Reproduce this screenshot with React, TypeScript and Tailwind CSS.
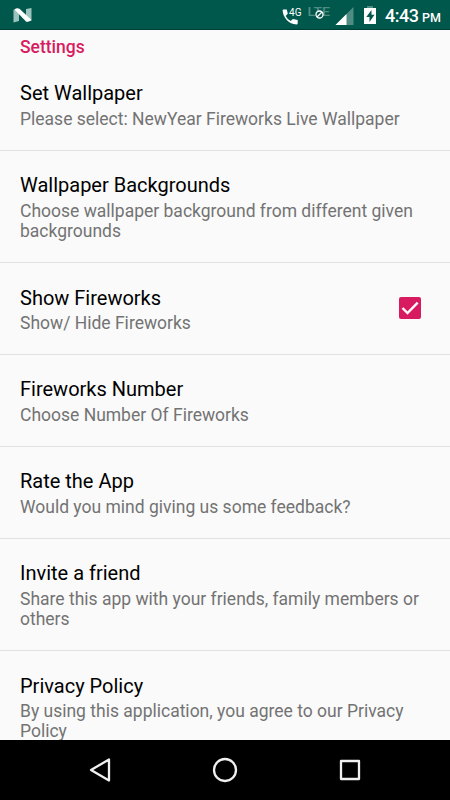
type Item = { title: string; lines: string[]; checked?: boolean; offset?: boolean };

const items: Item[] = [
  { title: 'Set Wallpaper', lines: ['Please select: NewYear Fireworks Live Wallpaper'] },
  { title: 'Wallpaper Backgrounds', lines: ['Choose wallpaper background from different given', 'backgrounds'] },
  { title: 'Show Fireworks', lines: ['Show/ Hide Fireworks'], checked: true, offset: true },
  { title: 'Fireworks Number', lines: ['Choose Number Of Fireworks'] },
  { title: 'Rate the App', lines: ['Would you mind giving us some feedback?'] },
  { title: 'Invite a friend', lines: ['Share this app with your friends, family members or', 'others'] },
  { title: 'Privacy Policy', lines: ['By using this application, you agree to our Privacy', 'Policy'], offset: true },
];

function StatusBar() {
  return (
    <header className="flex h-[30px] shrink-0 items-center justify-between border-b border-[#003d33] bg-[#00574b] text-white">
      <svg className="ml-[13px]" width="20" height="30" viewBox="13 0 20 30">
        <path d="M13.500 9.500l5.500 1v10.500l-5.500 1.500zM26 9l5.500-1v12.500l-5.500 1z" fill="#9cc3bd" />
        <path d="M14.500 9.500q2-2 5-.8L31.500 20q-2.500 2.500-5.500 1.500z" fill="#fff" />
      </svg>
      <div className="flex h-full items-center">
        <svg width="98" height="30" viewBox="281 0 98 30" fontFamily="Roboto, sans-serif">
          <path d="M283.300 9.500h3.500l1 4.200-2.200 2.300q1.900 3.400 5.100 5.100l2.200-2.200 4.800 1v3.700q-.2.900-1.100.9C288.500 24.300 283 17.500 282.600 10.300q0-.8.7-.8z" fill="#fff" />
          <text x="289" y="15.500" fontSize="11.500" fill="#fff" textLength="12.500" lengthAdjust="spacingAndGlyphs">4G</text>
          <text x="307.500" y="16" fontSize="13.500" fontWeight="500" fill="#4f8d84" textLength="22.500" lengthAdjust="spacingAndGlyphs">LTE</text>
          <circle cx="319.500" cy="14.500" r="3.500" fill="#00574b" stroke="#fff" strokeWidth="1.300" />
          <path d="M317 17l5-5" stroke="#fff" strokeWidth="1.300" />
          <path d="M353.500 7v18h-18z" fill="#4f8d84" />
          <path d="M346.500 14v11h-11z" fill="#fff" />
          <path d="M367 6h6v2h-6z" fill="#4f8d84" />
          <path d="M364 8h12v16h-12z" fill="#fff" />
          <path d="M371.500 10l-5.200 7h3.200v5l5-7.200h-3z" fill="#00574b" />
        </svg>
        <div className="ml-[6px] flex w-[65px] items-baseline whitespace-nowrap pt-[4px] font-medium leading-[30px]">
          <span className="text-[18px] tracking-[-0.5px]">4:43</span>
          <span className="ml-[3.5px] text-[12.5px]">PM</span>
        </div>
      </div>
    </header>
  );
}

function Row({ item, last }: { item: Item; last: boolean }) {
  return (
    <section
      className={`flex shrink-0 items-start justify-between border-[#e1e1e1] pl-5 pr-[29px] ${last ? '' : 'border-b'} ${item.lines.length > 1 ? 'h-[112px]' : 'h-[92px]'}`}
    >
      <div className={`whitespace-nowrap ${item.offset ? 'pt-[23px]' : 'pt-[22px]'}`}>
        <h2 className="text-[20px] leading-6 text-black">{item.title}</h2>
        <p className={`text-[17.5px] leading-[20px] text-[#737373] ${item.offset ? 'mt-[3px]' : 'mt-[4px]'}`}>
          {item.lines.map((line) => (
            <span key={line} className="block">{line}</span>
          ))}
        </p>
      </div>
      {item.checked && (
        <svg className="mt-[34px]" width="22" height="22" viewBox="0 0 22 22">
          <rect width="22" height="22" rx="2" fill="#d81b60" />
          <path d="M3.500 11l5 5L18.700 5.700" fill="none" stroke="#fafafa" strokeWidth="2.400" />
        </svg>
      )}
    </section>
  );
}

export default function App() {
  return (
    <div className="flex h-[800px] w-[450px] flex-col overflow-hidden bg-[#fafafa] font-[Roboto,'Noto_Sans',sans-serif]">
      <StatusBar />
      <main className="flex min-h-0 flex-1 flex-col overflow-hidden">
        <h1 className="h-[29px] shrink-0 pl-5 pt-[7px] text-[17.5px] font-medium leading-[21px] text-[#d81b60]">Settings</h1>
        {items.map((item, i) => (
          <Row key={item.title} item={item} last={i === items.length - 1} />
        ))}
      </main>
      <nav className="h-[60px] shrink-0 bg-black">
        <svg width="450" height="60" fill="none" stroke="#f0f0f0" strokeWidth="2.300" strokeLinejoin="round">
          <path d="M109 19.500v21L91 30z" />
          <circle cx="225" cy="30" r="11" />
          <rect x="341" y="21" width="18" height="18" />
        </svg>
      </nav>
    </div>
  );
}
